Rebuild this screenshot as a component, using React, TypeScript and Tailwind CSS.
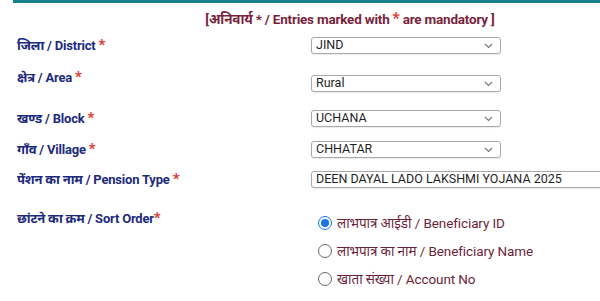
import { useState } from "react";

const fontStack = "font-['Roboto','Noto_Sans','Noto_Sans_Devanagari',sans-serif]";

interface FieldProps {
  hindi: string;
  english: string;
  value: string;
  rowClass: string;
  selectTop: string;
  wide?: boolean;
}

const fields: FieldProps[] = [
  { hindi: "जिला", english: "District", value: "JIND", rowClass: "mt-[8px]", selectTop: "mt-0" },
  { hindi: "क्षेत्र", english: "Area", value: "Rural", rowClass: "mt-[15px]", selectTop: "mt-[6px]" },
  { hindi: "खण्ड", english: "Block", value: "UCHANA", rowClass: "mt-[18px]", selectTop: "mt-0" },
  { hindi: "गाँव", english: "Village", value: "CHHATAR", rowClass: "mt-[14px]", selectTop: "mt-0" },
  { hindi: "पेंशन का नाम", english: "Pension Type", value: "DEEN DAYAL LADO LAKSHMI YOJANA 2025", rowClass: "mt-[13px]", selectTop: "mt-0", wide: true },
];

const sortOptions = [
  "लाभपात्र आईडी / Beneficiary ID",
  "लाभपात्र का नाम / Beneficiary Name",
  "खाता संख्या / Account No",
];

function Chevron() {
  return (
    <svg width="9" height="6" viewBox="0 0 9 6" className="shrink-0">
      <path d="M1 1l3.5 3.5L8 1" fill="none" stroke="#777" strokeWidth="1.1" />
    </svg>
  );
}

function FakeSelect({ value, wide }: { value: string; wide?: boolean }) {
  return (
    <div
      className={`flex h-[17px] shrink-0 items-center justify-between rounded-[3px] border border-[#a9a9a9] bg-white pl-[4px] pr-[7px] shadow-[0_1px_1px_rgba(0,0,0,0.08)] ${
        wide ? "w-[300px]" : "w-[190px]"
      }`}
    >
      <span className="whitespace-nowrap text-[12.5px] leading-none text-[#1f1f1f]">{value}</span>
      {!wide && <Chevron />}
    </div>
  );
}

export default function App() {
  const [sortBy, setSortBy] = useState(0);

  return (
    <div className={`h-[301px] w-[600px] overflow-hidden bg-white ${fontStack}`}>
      <div className="ml-[13px] h-[3px] bg-[#17808a]"></div>

      <div className="mt-[6px] flex items-center justify-center pl-[100px] text-[13.5px] font-bold leading-[20px] tracking-[-0.2px] text-[#7a1f3c]">
        [अनिवार्य * / Entries marked with <span className="mx-[3px] text-[16px] text-[#e5392f]">*</span> are mandatory ]
      </div>

      {fields.map((f) => (
        <div key={f.english} className={`flex items-start ${f.rowClass}`}>
          <div className="w-[311px] shrink-0 pl-[17px] text-[13px] font-bold leading-[17px] tracking-[-0.2px] text-[#1c2a7d]">
            {f.hindi} / {f.english} <span className="text-[15px] text-[#e5392f]">*</span>
          </div>
          <div className={`shrink-0 ${f.selectTop}`}>
            <FakeSelect value={f.value} wide={f.wide} />
          </div>
        </div>
      ))}

      <div className="mt-[22px] flex items-start">
        <div className="w-[311px] shrink-0 pl-[17px] text-[13px] font-bold leading-[17px] tracking-[-0.2px] text-[#1c2a7d]">
          छांटने का क्रम / Sort Order<span className="text-[15px] text-[#e5392f]">*</span>
        </div>
        <div className="mt-[5px] flex flex-col gap-[12px] pl-[7px]">
          {sortOptions.map((opt, i) => (
            <label key={opt} className="flex items-center gap-[5px] whitespace-nowrap text-[13.5px] leading-[16px] tracking-[-0.1px] text-[#6b1f3a]">
              <span
                className={`flex h-[14px] w-[14px] items-center justify-center rounded-full border ${
                  sortBy === i ? "border-[#1a73e8]" : "border-[#666]"
                } bg-white`}
                onClick={() => setSortBy(i)}
              >
                {sortBy === i && <span className="h-[8px] w-[8px] rounded-full bg-[#1a73e8]"></span>}
              </span>
              {opt}
            </label>
          ))}
        </div>
      </div>
    </div>
  );
}
